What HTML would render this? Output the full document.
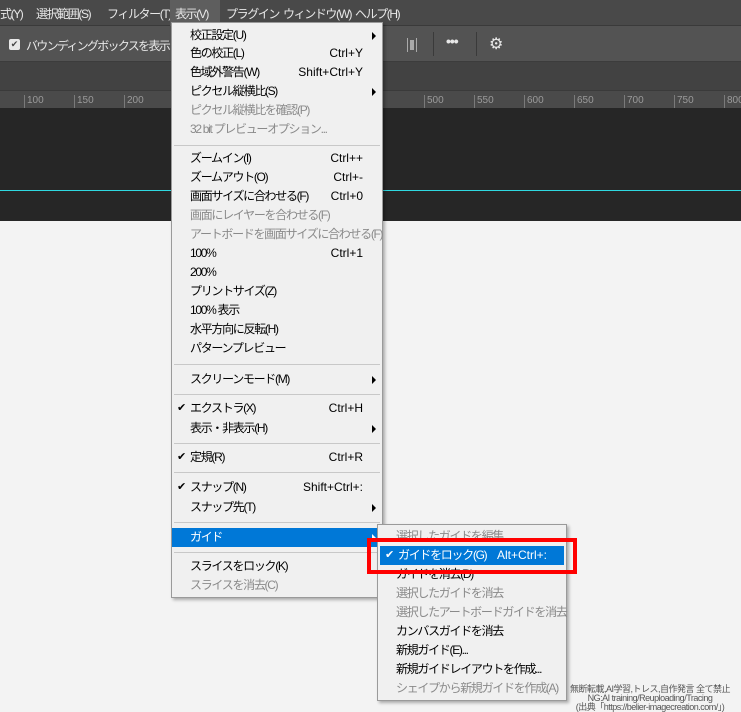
<!DOCTYPE html>
<html><head><meta charset="utf-8"><style>
*{margin:0;padding:0;box-sizing:border-box}
body{width:741px;height:711px;overflow:hidden;background:#f3f3f3;position:relative;font-family:"Liberation Sans","Noto Sans CJK JP",sans-serif;font-size:12px}
.abs{position:absolute}
.mb{left:0;top:0;width:741px;height:26px;background:#494949;border-bottom:1px solid #3a3a3a;color:#e8e8e8;letter-spacing:-1.4px}
.mb span{position:absolute;top:5px}
.ob{left:0;top:26px;width:741px;height:36px;background:#535353;border-bottom:1px solid #3c3c3c;color:#e8e8e8}
.tb{left:0;top:62px;width:741px;height:29px;background:#424242}
.ru{left:0;top:90px;width:741px;height:18px;background:#4a4a4a;border-top:1px solid #3a3a3a;color:#9a9a9a;font-size:10px}
.ru span{position:absolute;top:4px;border-left:1px solid #7a7a7a;padding-left:2px;height:13px}
.cv{left:0;top:108px;width:741px;height:113px;background:#262626}
.menu{background:#f0f0f0;border:1px solid #9a9a9a;box-shadow:2px 2px 3px rgba(0,0,0,.3);color:#000}
.it{position:absolute;left:0;right:0;height:19px;line-height:19px;padding-left:18px;white-space:nowrap;letter-spacing:-1.3px}
.it .k{position:absolute;right:19px;letter-spacing:0}
.it .a{position:absolute;right:6px;top:6px;width:0;height:0;border-left:4px solid #000;border-top:4px solid transparent;border-bottom:4px solid transparent}
.it .c{position:absolute;left:5px;font-size:11px;letter-spacing:0}
.d{color:#8a8a8a}
.sep{position:absolute;left:2px;right:2px;height:1px;background:#c8c8c8}
.hl{background:#0078d7;color:#fff}
</style></head><body>
<div class="abs mb">
<span style="left:0">式(Y)</span><span style="left:36px">選択範囲(S)</span><span style="left:107px">フィルター(T)</span>
<span style="left:170px;top:0;height:26px;width:50px;background:#5e5e5e"></span><span style="left:175px">表示(V)</span>
<span style="left:226px">プラグイン</span><span style="left:283px">ウィンドウ(W)</span><span style="left:355px">ヘルプ(H)</span>
</div>
<div class="abs ob">
<div class="abs" style="left:9px;top:13px;width:11px;height:11px;background:#e8e8e8;border-radius:2px;color:#444;font-size:9px;line-height:11px;text-align:center">✔</div>
<span class="abs" style="left:26px;top:11px;letter-spacing:-1.7px">バウンディングボックスを表示</span>
<div class="abs" style="left:407px;top:12px;width:1px;height:14px;background:#aaa"></div>
<div class="abs" style="left:410px;top:14px;width:4px;height:10px;background:#aaa"></div>
<div class="abs" style="left:416px;top:12px;width:1px;height:14px;background:#aaa"></div>
<div class="abs" style="left:433px;top:6px;width:1px;height:24px;background:#3a3a3a"></div>
<span class="abs" style="left:446px;top:7px;font-size:14px;font-weight:bold;letter-spacing:-1px">•••</span>
<div class="abs" style="left:476px;top:6px;width:1px;height:24px;background:#3a3a3a"></div>
<span class="abs" style="left:489px;top:8px;font-size:16px">⚙</span>
</div>
<div class="abs tb"></div>
<div class="abs ru">
<span style="left:24px">100</span><span style="left:74px">150</span><span style="left:124px">200</span>
<span style="left:424px">500</span><span style="left:474px">550</span><span style="left:524px">600</span><span style="left:574px">650</span><span style="left:624px">700</span><span style="left:674px">750</span><span style="left:724px">800</span>
</div>
<div class="abs cv"><div class="abs" style="left:0;top:82px;width:741px;height:1px;background:#2fd8e0"></div></div>

<div class="abs menu" style="left:171px;top:22px;width:212px;height:576px">
<div class="it" style="top:3px">校正設定(U)<i class="a"></i></div>
<div class="it" style="top:21px">色の校正(L)<span class="k">Ctrl+Y</span></div>
<div class="it" style="top:40px">色域外警告(W)<span class="k">Shift+Ctrl+Y</span></div>
<div class="it" style="top:59px">ピクセル縦横比(S)<i class="a"></i></div>
<div class="it d" style="top:78px">ピクセル縦横比を確認(P)</div>
<div class="it d" style="top:97px">32 bit プレビューオプション...</div>
<div class="sep" style="top:122px"></div>
<div class="it" style="top:126px">ズームイン(I)<span class="k">Ctrl++</span></div>
<div class="it" style="top:145px">ズームアウト(O)<span class="k">Ctrl+-</span></div>
<div class="it" style="top:164px">画面サイズに合わせる(F)<span class="k">Ctrl+0</span></div>
<div class="it d" style="top:183px">画面にレイヤーを合わせる(F)</div>
<div class="it d" style="top:202px">アートボードを画面サイズに合わせる(F)</div>
<div class="it" style="top:221px">100%<span class="k">Ctrl+1</span></div>
<div class="it" style="top:240px">200%</div>
<div class="it" style="top:259px">プリントサイズ(Z)</div>
<div class="it" style="top:278px">100% 表示</div>
<div class="it" style="top:297px">水平方向に反転(H)</div>
<div class="it" style="top:316px">パターンプレビュー</div>
<div class="sep" style="top:341px"></div>
<div class="it" style="top:347px">スクリーンモード(M)<i class="a"></i></div>
<div class="sep" style="top:371px"></div>
<div class="it" style="top:376px"><span class="c">✔</span>エクストラ(X)<span class="k">Ctrl+H</span></div>
<div class="it" style="top:396px">表示・非表示(H)<i class="a"></i></div>
<div class="sep" style="top:420px"></div>
<div class="it" style="top:425px"><span class="c">✔</span>定規(R)<span class="k">Ctrl+R</span></div>
<div class="sep" style="top:449px"></div>
<div class="it" style="top:455px"><span class="c">✔</span>スナップ(N)<span class="k">Shift+Ctrl+:</span></div>
<div class="it" style="top:475px">スナップ先(T)<i class="a"></i></div>
<div class="sep" style="top:499px"></div>
<div class="it hl" style="top:505px">ガイド<i class="a" style="border-left-color:#fff"></i></div>
<div class="sep" style="top:529px"></div>
<div class="it" style="top:534px">スライスをロック(K)</div>
<div class="it d" style="top:553px">スライスを消去(C)</div>
</div>

<div class="abs menu" style="left:377px;top:524px;width:190px;height:177px">
<div class="it d" style="top:2px">選択したガイドを編集</div>
<div class="it hl" style="top:21px;left:2px;right:2px;padding-left:18px"><span class="c">✔</span>ガイドをロック(G)<span class="k" style="right:17px">Alt+Ctrl+:</span></div>
<div class="it" style="top:40px">ガイドを消去(D)</div>
<div class="it d" style="top:59px">選択したガイドを消去</div>
<div class="it d" style="top:78px">選択したアートボードガイドを消去</div>
<div class="it" style="top:97px">カンバスガイドを消去</div>
<div class="it" style="top:116px">新規ガイド(E)...</div>
<div class="it" style="top:135px">新規ガイドレイアウトを作成...</div>
<div class="it d" style="top:154px">シェイプから新規ガイドを作成(A)</div>
</div>
<div class="abs" style="left:367px;top:538px;width:210px;height:36px;border:4px solid #f00"></div>

<div class="abs" style="left:560px;top:685px;width:180px;text-align:center;font-size:9px;line-height:9px;color:#555;white-space:nowrap;letter-spacing:-0.5px">無断転載,AI学習,トレス,自作発言 全て禁止<br>NG:AI training/Reuploading/Tracing<br>(出典「https://belier-imagecreation.com/」)</div>
</body></html>
